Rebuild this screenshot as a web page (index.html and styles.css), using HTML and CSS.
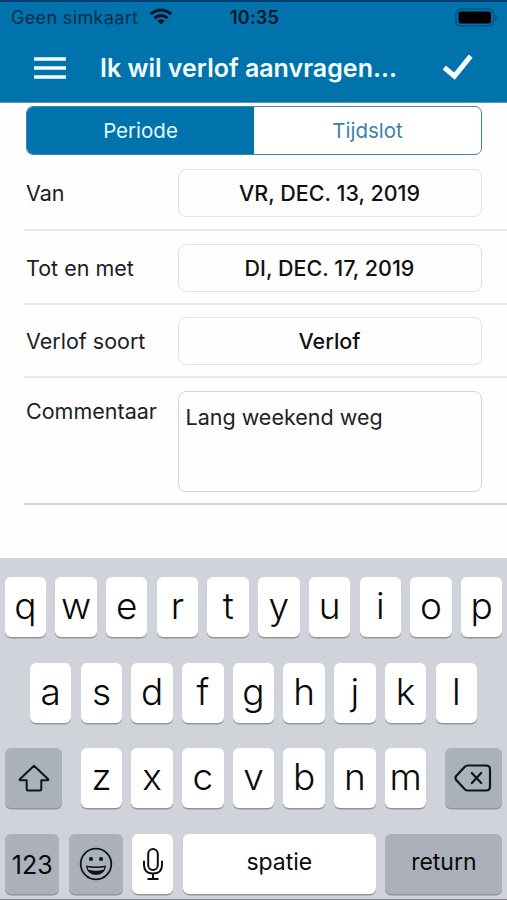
FILE: index.html
```html
<!DOCTYPE html>
<html lang="nl">
<head>
<meta charset="utf-8">
<title>Ik wil verlof aanvragen</title>
<link rel="stylesheet" href="styles.css">
</head>
<body>
<div class="phone">
  <header class="header">
    <div class="status">
      <div class="carrier"><span class="carrier-name">Geen simkaart</span>
        <svg class="wifi" viewBox="0 0 24 17" width="24" height="17"><g fill="none" stroke="#04131f" stroke-width="3"><path d="M1.8 6.1Q12-2.2 22.2 6.1"/><path d="M5.5 10.1Q12 4.8 18.5 10.1"/></g><path d="M8.4 12.8Q12 10 15.6 12.8L12 16.5Z" fill="#04131f"/></svg>
      </div>
      <span class="clock">10:35</span>
      <svg class="battery" viewBox="0 0 43 19" width="43" height="19"><rect x="1" y="1" width="37.5" height="17" rx="5" fill="none" stroke="#07517b" stroke-width="1.6"/><rect x="3.5" y="3.5" width="32.5" height="12" rx="2" fill="#000"/><path d="M40.2 6.5q2 .8 2 3t-2 3z" fill="#07517b"/></svg>
    </div>
    <div class="navbar">
      <svg class="menu" viewBox="0 0 32 22" width="32" height="22"><path d="M0 2h32M0 11h32M0 20h32" stroke="#f4ffff" stroke-width="3.6"/></svg>
      <h1 class="title">Ik wil verlof aanvragen...</h1>
      <svg class="check" viewBox="0 0 32 27" width="32" height="27"><path d="M2.3 13.5 12.4 22.2 28.7 2.2" fill="none" stroke="#fff" stroke-width="5"/></svg>
    </div>
  </header>
  <main class="form">
    <div class="segments">
      <div class="segment active"><span class="periode">Periode</span></div>
      <div class="segment"><span class="tijdslot">Tijdslot</span></div>
    </div>
    <div class="row"><span class="label van">Van</span><div class="field"><span class="date1">VR, DEC. 13, 2019</span></div></div>
    <div class="row"><span class="label tot">Tot en met</span><div class="field"><span class="date2">DI, DEC. 17, 2019</span></div></div>
    <div class="row"><span class="label soort">Verlof soort</span><div class="field"><span class="verlof">Verlof</span></div></div>
    <div class="row comment"><span class="label commentaar">Commentaar</span><div class="field textarea"><span>Lang weekend weg</span></div></div>
  </main>
  <section class="keyboard">
    <div class="keys">
      <div class="key">q</div><div class="key">w</div><div class="key">e</div><div class="key">r</div><div class="key">t</div><div class="key">y</div><div class="key">u</div><div class="key">i</div><div class="key">o</div><div class="key">p</div>
    </div>
    <div class="keys">
      <div class="key">a</div><div class="key">s</div><div class="key">d</div><div class="key">f</div><div class="key">g</div><div class="key">h</div><div class="key">j</div><div class="key">k</div><div class="key">l</div>
    </div>
    <div class="keys spread">
      <div class="key gray shift"><svg viewBox="0 0 32 28" width="32" height="28"><path d="M16 1.8 1.8 15.2Q1.2 16.2 2.4 16.2H8.7V25Q8.7 26.5 10.2 26.5H21.8Q23.3 26.5 23.3 25V16.2H29.6Q30.8 16.2 30.2 15.2Z" fill="none" stroke="#10141a" stroke-width="2" stroke-linejoin="round"/></svg></div>
      <div class="letters"><div class="key">z</div><div class="key">x</div><div class="key">c</div><div class="key">v</div><div class="key">b</div><div class="key">n</div><div class="key">m</div></div>
      <div class="key gray delete"><svg viewBox="0 0 38 28" width="38" height="28"><g fill="none" stroke="#10141a" stroke-width="2.2" stroke-linejoin="round" stroke-linecap="round"><path d="M13.5 1.5H32Q36 1.5 36 5.5V22.5Q36 26.5 32 26.5H13.5Q12 26.5 10.8 25.2L2.2 16Q.8 14 2.2 12L10.8 2.8Q12 1.5 13.5 1.5Z"/><path d="m17.8 9 9.4 10M27.2 9l-9.4 10"/></g></svg></div>
    </div>
    <div class="keys spread">
      <div class="key gray numbers">123</div>
      <div class="key gray emoji"><svg viewBox="0 0 34 34" width="34" height="34"><circle cx="17" cy="17" r="15.3" fill="none" stroke="#10141a" stroke-width="1.8"/><circle cx="12" cy="12" r="2.1" fill="#10141a"/><circle cx="22" cy="12" r="2.1" fill="#10141a"/><path d="M7 18.5Q17 20.5 27 18.5Q26.5 27.5 17 28Q7.500 27.5 7 18.500Z" fill="#10141a"/><path d="M8.700 20.200Q17 22 25.300 20.200L24.800 22.500Q17 25 9.200 22.500Z" fill="#abb1bb"/></svg></div>
      <div class="key mic"><svg viewBox="0 0 22 34" width="22" height="34"><g fill="none" stroke="#111" stroke-width="2" stroke-linecap="round"><rect x="6.200" y="2" width="9.600" height="21" rx="4.800"/><path d="M2 14.500V18Q2 26.500 11 26.500T20 18V14.500M11 26.500V32M6.200 32H15.800"/></g></svg></div>
      <div class="key space"><span>spatie</span></div>
      <div class="key gray return"><span>return</span></div>
    </div>
  </section>
</div>
</body>
</html>
```

FILE: styles.css
```css
* { box-sizing: border-box; }
body { margin: 0; background: #fff; font-family: Inter, "Liberation Sans", sans-serif; color: #1d1d1f; }
.phone { width: 507px; height: 900px; display: flex; flex-direction: column; overflow: hidden; border-bottom: 1px solid #85868c; }
.phone svg { display: block; flex: none; }
.header { height: 103px; background: #0073ac; border-top: 2px solid #063f70; border-bottom: 1px solid #5a91b3; flex: none; }
.status { height: 31px; display: grid; grid-template-columns: 1fr auto 1fr; align-items: center; padding: 0 9px 0 11px; color: #052d49; }
.carrier { display: flex; align-items: center; gap: 10px; font-size: 18px; white-space: nowrap; }
.carrier-name { width: 128px; letter-spacing: .35px; }
.wifi { margin-top: -3px; }
.clock { font-size: 18px; font-weight: 600; letter-spacing: .2px; color: #03182a; }
.battery { justify-self: end; }
.navbar { height: 69px; display: flex; align-items: center; padding: 0 33px 0 34px; }
.title { margin: 0 0 0 34px; width: 342px; font-size: 25px; line-height: 34px; font-weight: 600; color: #f4ffff; white-space: nowrap; }
.form { flex: none; height: 455px; padding-top: 3px; background: #fefefe; }
.segments { display: flex; width: 456px; height: 49px; margin-left: 26px; border: 1.5px solid #4382a8; border-radius: 7px; overflow: hidden; background: #fff; }
.segment { flex: 1; display: flex; align-items: center; justify-content: center; font-size: 20.5px; color: #3b82aa; }
.segment.active { background: #0073ac; color: #e2f8ff; }
.row { height: 73.5px; margin-left: 24px; padding: 12.500px 25px 0 2px; border-bottom: 2px solid #e8e8e9; display: flex; }
.segments + .row { height: 76px; padding-top: 14px; }
.label { width: 151.500px; font-size: 21.500px; line-height: 49px; white-space: nowrap; }
.field { width: 304px; height: 48px; flex: none; border: 1.500px solid #e3e3e4; border-radius: 8px; display: flex; justify-content: center; align-items: center; font-size: 21.500px; font-weight: 500; color: #111; white-space: nowrap; }
.row.comment { height: 127px; border-bottom-color: #d7d7d9; }
.comment .label { line-height: 40px; }
.field.textarea { height: 101px; border-color: #d5d5d7; justify-content: flex-start; align-items: flex-start; padding: 12px 7px; font-weight: 400; color: #222; line-height: 26px; }
.keyboard { flex: 1; background: #d1d3da; padding: 19px 5.300px 0; display: flex; flex-direction: column; gap: 25.500px; }
.keys, .letters { display: flex; justify-content: center; gap: 9.300px; }
.keys { height: 60px; flex: none; }
.keys.spread { justify-content: space-between; }
.key { width: 41.400px; height: 60px; flex: none; display: flex; align-items: center; justify-content: center; padding-bottom: 3px; background: #fff; border-radius: 6px; box-shadow: 0 1.500px 0 #94969c; font-size: 37px; font-weight: 300; color: #090909; }
.key.gray { background: #abb1bb; }
.key.shift, .key.delete { width: 57px; padding-bottom: 0; }
.key.numbers { width: 54px; font-size: 25px; font-weight: 400; padding: 2px 0 0; }
.key.emoji { width: 54px; padding: 0; }
.key.mic { padding: 0; }
.key.space { width: 193.500px; font-size: 23px; font-weight: 400; }
.key.return { width: 117px; font-size: 23px; font-weight: 400; }
```
